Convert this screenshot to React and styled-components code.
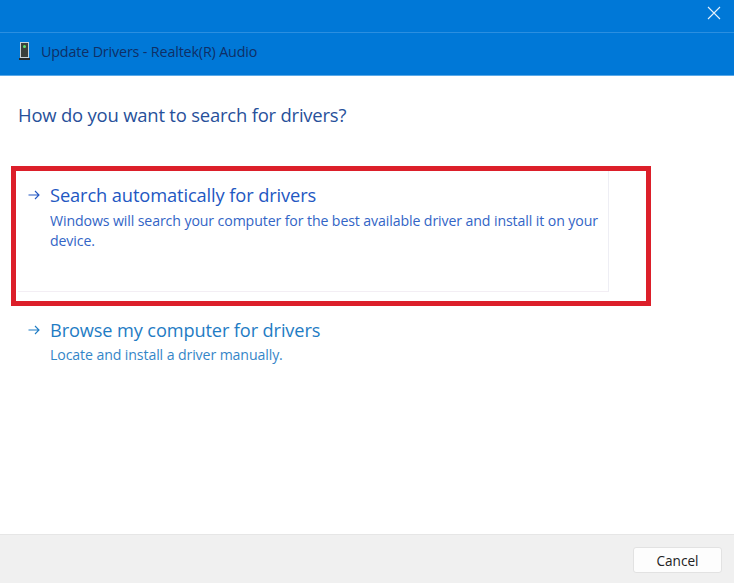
import React from "react";
import styled, { createGlobalStyle } from "styled-components";

const Global = createGlobalStyle`
  html, body {
    margin: 0;
    padding: 0;
    background: #fff;
  }
  * {
    box-sizing: border-box;
  }
`;

const Window = styled.div`
  width: 734px;
  height: 583px;
  display: flex;
  flex-direction: column;
  overflow: hidden;
  font-family: "Open Sans", "Noto Sans", sans-serif;
  background: #fff;
`;

const TitleBar = styled.div`
  height: 33px;
  flex: none;
  display: flex;
  justify-content: flex-end;
  align-items: flex-start;
  padding: 6px 13px 0 0;
  background: #0078d7;
  border-bottom: 1px solid #2b8fe0;
`;

const Header = styled.div`
  height: 43px;
  flex: none;
  display: flex;
  align-items: center;
  gap: 11px;
  padding: 0 0 5px 19px;
  background: #0078d7;
  border-bottom: 1px solid #5aa9e8;
`;

const HeaderText = styled.span`
  font-size: 14.3px;
  letter-spacing: -0.15px;
  color: #0f2f66;
`;

const Content = styled.main`
  flex: 1;
  display: flex;
  flex-direction: column;
  padding: 25px 0 0 18px;
`;

const Heading = styled.h1`
  margin: 0 0 42px;
  font-size: 18.45px;
  line-height: 28px;
  font-weight: 400;
  letter-spacing: -0.2px;
  color: #27509a;
`;

const Option = styled.div`
  position: relative;
  width: 591px;
  height: ${(p) => p.$height}px;
  display: grid;
  grid-template-columns: 32px 1fr;
  align-content: start;
  margin-bottom: ${(p) => p.$gap || 0}px;
  padding-top: ${(p) => p.$top}px;
  border-right: ${(p) => (p.$outlined ? "1px solid #eeeef4" : "none")};
  border-bottom: ${(p) => (p.$outlined ? "1px solid #f3eef4" : "none")};
  color: ${(p) => p.$color};
`;

const Arrow = styled.svg`
  width: 12px;
  height: 10px;
  margin: 8px 0 0 10px;
  stroke: ${(p) => p.$color};
`;

const OptionTitle = styled.div`
  font-size: ${(p) => p.$size}px;
  line-height: 26px;
  letter-spacing: -0.12px;
  white-space: nowrap;
`;

const OptionText = styled.div`
  grid-column: 2;
  width: 560px;
  margin-top: ${(p) => p.$top}px;
  font-size: 14.15px;
  line-height: 20px;
  letter-spacing: -0.11px;
  opacity: 0.92;
`;

// red annotation drawn over the first option
const Highlight = styled.div`
  position: absolute;
  left: -7px;
  top: -5px;
  width: 640px;
  height: 140px;
  border: 5px solid #dc1f2a;
  pointer-events: none;
`;

const Footer = styled.footer`
  height: 49px;
  flex: none;
  display: flex;
  justify-content: flex-end;
  align-items: flex-start;
  padding: 12px 12px 0 0;
  background: #f0f0f0;
  border-top: 1px solid #e6e6e6;
`;

const CancelButton = styled.button`
  width: 89px;
  height: 26px;
  padding: 0;
  font-family: inherit;
  font-size: 13.6px;
  color: #222;
  background: #fdfdfd;
  border: 1px solid #e2e2e2;
  border-radius: 3px;
`;

const OptionArrow = ({ color }) => (
  <Arrow viewBox="0 0 12 10" fill="none" strokeWidth="1.1" $color={color}>
    <path d="M0.5 5H11M7 1l4 4-4 4" />
  </Arrow>
);

const DeviceIcon = () => (
  <svg width="11" height="20" viewBox="0 0 11 20">
    <rect x="1" y="0" width="9" height="16" fill="#c9d2d8" />
    <rect x="2" y="1" width="7" height="14" fill="#3a3f3c" />
    <circle cx="5.5" cy="4.5" r="1.5" fill="#5fe36d" />
    <rect x="0" y="16" width="11" height="2" fill="#24292c" />
  </svg>
);

const CloseIcon = () => (
  <svg width="14" height="14" viewBox="0 0 14 14" stroke="#e6f2fc" strokeWidth="1.1">
    <path d="M1 1l12 12M13 1L1 13" />
  </svg>
);

const App = () => (
  <>
    <Global />
    <Window>
      <TitleBar>
        <CloseIcon />
      </TitleBar>
      <Header>
        <DeviceIcon />
        <HeaderText>Update Drivers - Realtek(R) Audio</HeaderText>
      </Header>
      <Content>
        <Heading>How do you want to search for drivers?</Heading>
        <Option $outlined $height={121} $gap={25} $top={11} $color="#2257c2">
          <OptionArrow color="#2257c2" />
          <OptionTitle $size={18.3}>Search automatically for drivers</OptionTitle>
          <OptionText $top={3}>
            Windows will search your computer for the best available driver and install it on your device.
          </OptionText>
          <Highlight />
        </Option>
        <Option $height={70} $top={0} $color="#1f7cc4">
          <OptionArrow color="#1f7cc4" />
          <OptionTitle $size={18.2}>Browse my computer for drivers</OptionTitle>
          <OptionText $top={2}>Locate and install a driver manually.</OptionText>
        </Option>
      </Content>
      <Footer>
        <CancelButton>Cancel</CancelButton>
      </Footer>
    </Window>
  </>
);

export default App;
